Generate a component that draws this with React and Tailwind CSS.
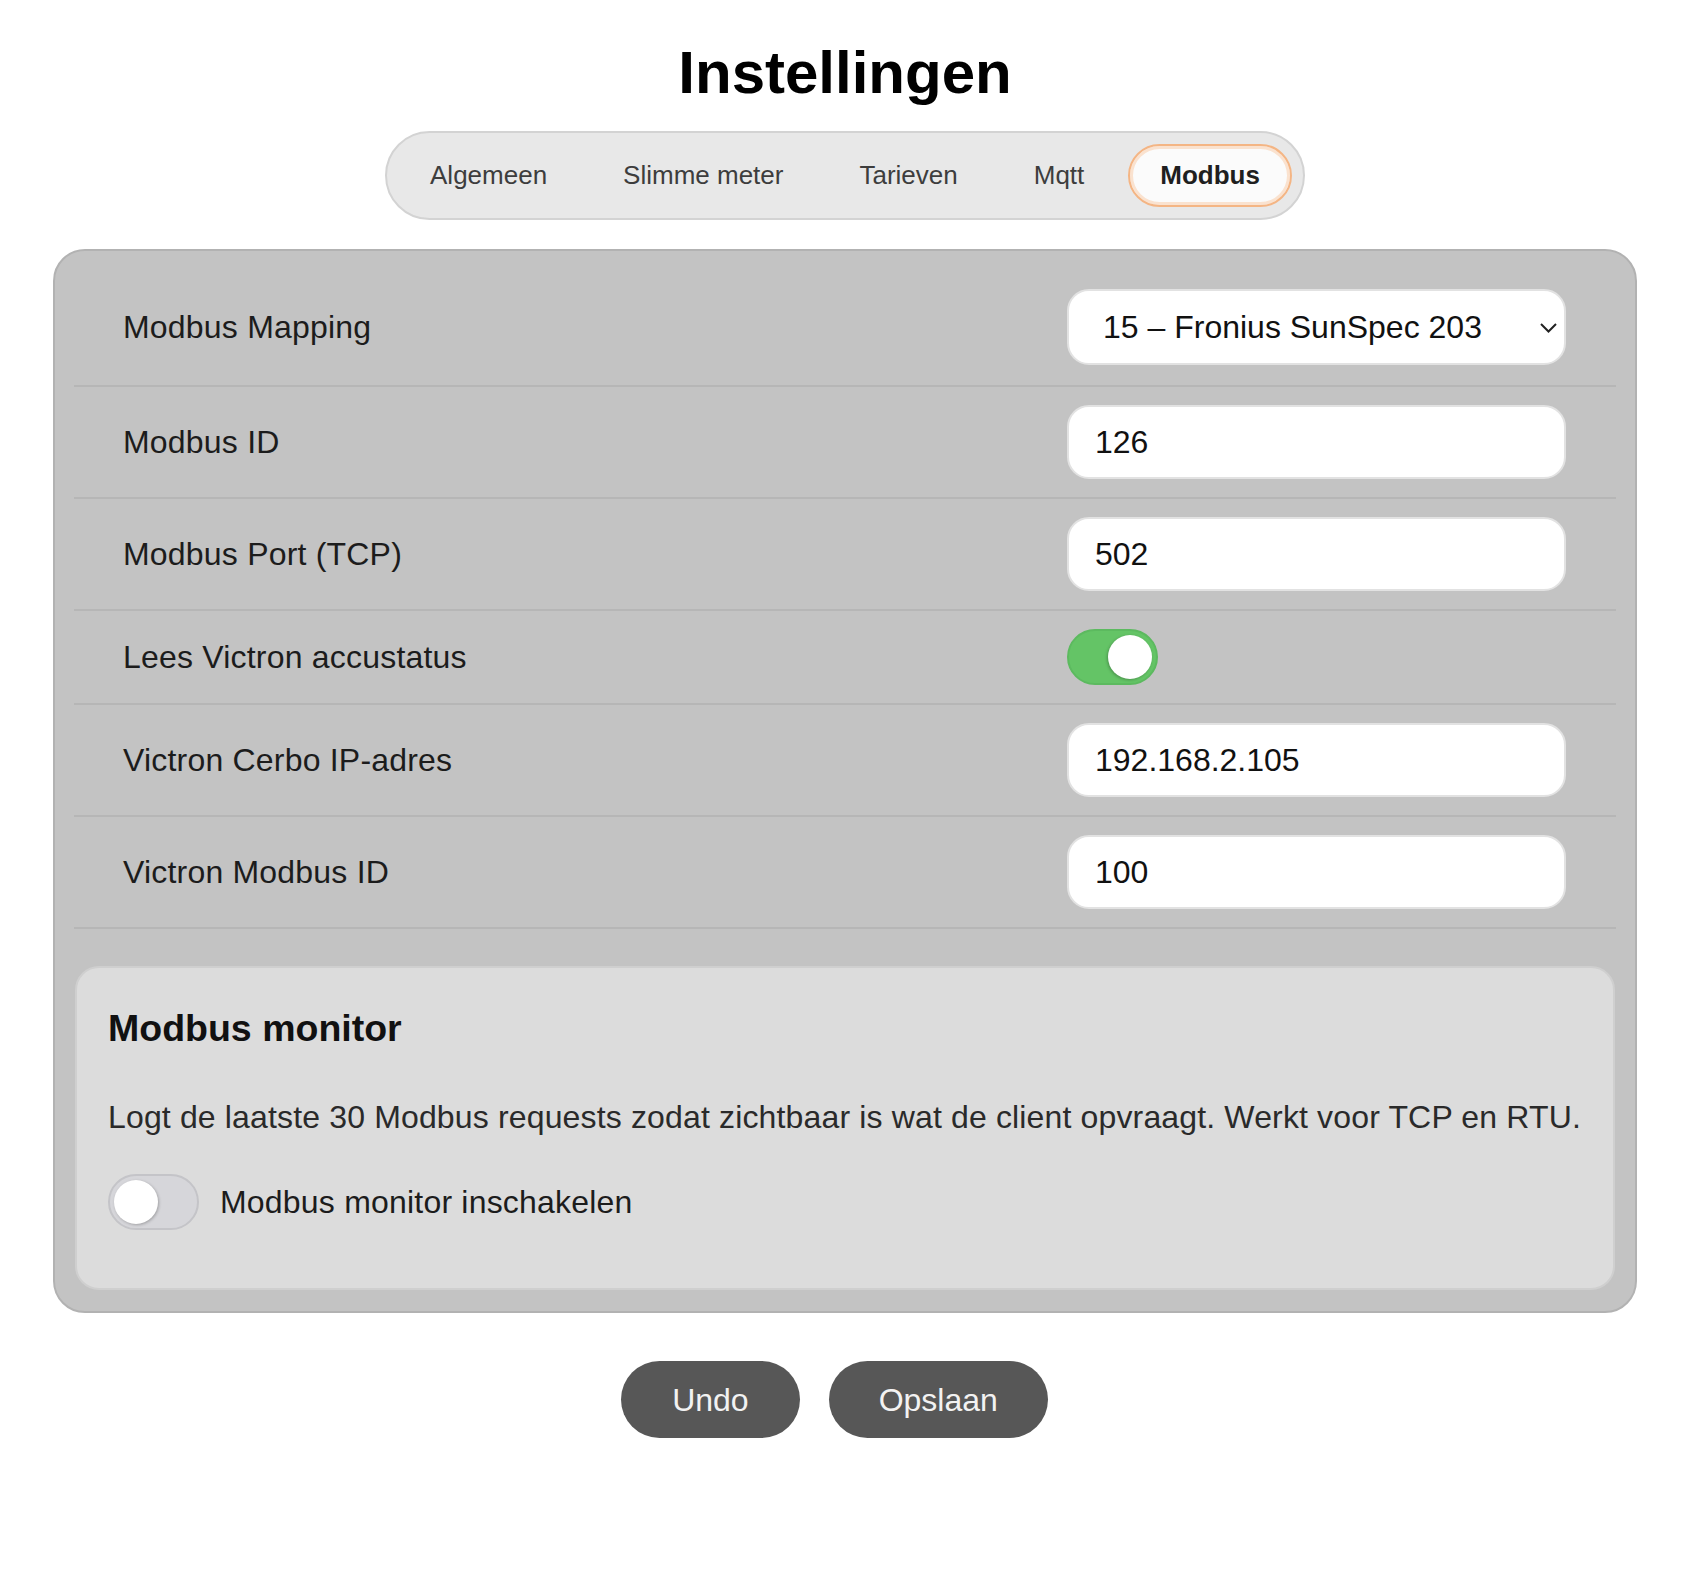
import React from 'react';

const font = { fontFamily: '"Liberation Sans", Arial, Helvetica, sans-serif' };

const tabs = ['Algemeen', 'Slimme meter', 'Tarieven', 'Mqtt', 'Modbus'];

const Toggle = ({ on }) => (
  <button
    type="button"
    className={
      on
        ? 'relative w-[91px] h-[56px] rounded-full border-2 border-[#5cba5f] bg-[#64c466] shrink-0'
        : 'relative w-[91px] h-[56px] rounded-full border-2 border-[#c4c4c8] bg-[#d6d6da] shrink-0'
    }
  >
    <span
      className={
        on
          ? 'absolute top-[4px] right-[4px] w-[44px] h-[44px] rounded-full bg-white shadow-[-1px_1px_3px_rgba(0,0,0,0.25)]'
          : 'absolute top-[4px] left-[4px] w-[44px] h-[44px] rounded-full bg-white shadow-[1px_1px_3px_rgba(0,0,0,0.25)]'
      }
    />
  </button>
);

const TextField = ({ value }) => (
  <input
    type="text"
    defaultValue={value}
    className="w-[499px] h-[74px] rounded-[22px] border-2 border-[#e2e2e2] bg-white pl-[26px] text-[32px] text-[#111] outline-none"
    style={font}
  />
);

const Row = ({ label, children, tall }) => (
  <div
    className={
      tall
        ? 'flex items-center justify-between pl-[49px] pr-[50px] py-[20px] border-b-2 border-[#b6b6b6]'
        : 'flex items-center justify-between pl-[49px] pr-[50px] py-[18px] border-b-2 border-[#b6b6b6]'
    }
  >
    <span className="text-[32px] text-[#1c1c1c] tracking-[0.2px]">{label}</span>
    <div className="w-[499px] flex">{children}</div>
  </div>
);

export default function App() {
  return (
    <div className="min-h-screen bg-white pb-[100px]" style={font}>
      {/* Header */}
      <h1 className="pt-[43px] text-center text-[60px] leading-[60px] font-bold text-black">Instellingen</h1>

      {/* Tabs */}
      <div className="mt-[28px] flex justify-center">
        <div className="flex items-center gap-[12px] p-[11px] rounded-full border-2 border-[#d3d3d3] bg-[#e8e8e8]">
          {tabs.map((t) =>
            t === 'Modbus' ? (
              <div
                key={t}
                className="h-[63px] px-[30px] flex items-center rounded-full border-2 border-[#f4b584] bg-[#fbfbfb] shadow-[inset_0_0_0_3px_#fae2cf] text-[26px] font-bold text-[#1f1f1f]"
              >
                {t}
              </div>
            ) : (
              <div
                key={t}
                className="h-[63px] px-[30px] flex items-center rounded-full border-2 border-transparent text-[26px] text-[#3d3d3d]"
              >
                {t}
              </div>
            )
          )}
        </div>
      </div>

      {/* Settings card */}
      <div className="mt-[29px] mx-[53px] rounded-[32px] border-2 border-[#b2b2b2] bg-[#c3c3c3] px-[19px] pt-[18px] pb-[21px]">
        <Row label="Modbus Mapping" tall>
          <div className="relative w-full">
            <select
              defaultValue="15"
              className="appearance-none w-full h-[76px] rounded-[22px] border-2 border-[#e2e2e2] bg-white pl-[34px] text-[32px] text-[#111] outline-none"
              style={font}
            >
              <option value="15">15 – Fronius SunSpec 203</option>
            </select>
            <svg
              className="absolute right-[9px] top-[34px] pointer-events-none"
              width="17"
              height="10"
              viewBox="0 0 17 10"
              fill="none"
            >
              <path d="M1 1l7.5 7.5L16 1" stroke="#222" strokeWidth="2" />
            </svg>
          </div>
        </Row>
        <Row label="Modbus ID">
          <TextField value="126" />
        </Row>
        <Row label="Modbus Port (TCP)">
          <TextField value="502" />
        </Row>
        <Row label="Lees Victron accustatus">
          <Toggle on />
        </Row>
        <Row label="Victron Cerbo IP-adres">
          <TextField value="192.168.2.105" />
        </Row>
        <Row label="Victron Modbus ID">
          <TextField value="100" />
        </Row>

        {/* Monitor panel */}
        <div className="mt-[37px] mx-px rounded-[24px] border-2 border-[#cfcfcf] bg-[#dcdcdc] pl-[31px] pr-[20px] pt-[38px] pb-[58px]">
          <h3 className="text-[37.5px] leading-[45px] font-bold text-[#111]">Modbus monitor</h3>
          <p className="mt-[46px] text-[32px] leading-[40px] text-[#2a2a2a] tracking-[0.15px]">
            Logt de laatste 30 Modbus requests zodat zichtbaar is wat de client opvraagt. Werkt voor TCP en RTU.
          </p>
          <div className="mt-[37px] flex items-center gap-[21px]">
            <Toggle />
            <span className="text-[32px] text-[#1c1c1c] tracking-[0.2px]">Modbus monitor inschakelen</span>
          </div>
        </div>
      </div>

      {/* Actions */}
      <div className="mt-[48px] flex justify-center gap-[29px] pr-[21px]">
        <button type="button" className="h-[77px] px-[51px] rounded-full bg-[#575757] text-[32px] text-[#f2f2f2]">
          Undo
        </button>
        <button type="button" className="h-[77px] px-[50px] rounded-full bg-[#575757] text-[32px] text-[#f2f2f2]">
          Opslaan
        </button>
      </div>
    </div>
  );
}
